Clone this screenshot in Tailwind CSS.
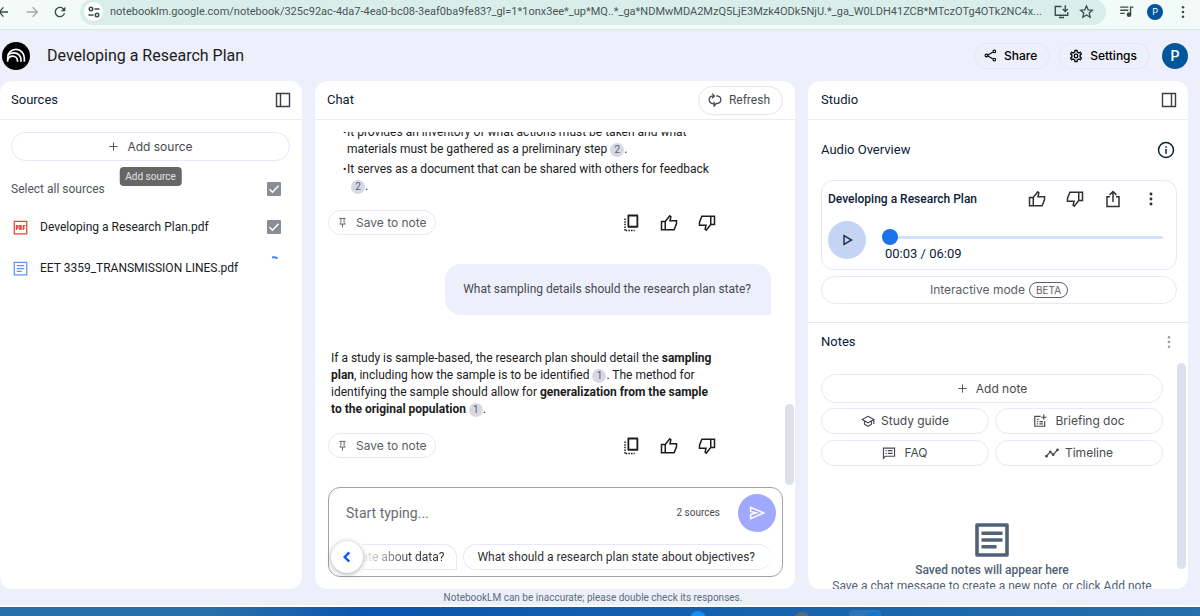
<!DOCTYPE html>
<html lang="en">
<head>
  <meta charset="UTF-8">
  <meta name="viewport" content="width=device-width, initial-scale=1.0">
  <title>Developing a Research Plan - NotebookLM</title>
  <script src="https://cdn.jsdelivr.net/npm/@tailwindcss/browser@4"></script>
</head>
<body class="h-screen overflow-hidden flex flex-col bg-[#edeffa] text-xs text-[#1b1c1d] font-[Roboto,sans-serif]">

  <!-- shared icons -->
  <svg class="hidden">
    <symbol id="thumb" viewBox="0 0 24 24"><path d="M2 10h5v11H2zM7 10l6-7.500 1.500 1.200L13.300 9H22v4l-3.200 8H7" fill="none" stroke="currentColor" stroke-width="2"/></symbol>
    <symbol id="copy" viewBox="0 0 24 24"><path d="M8.500 2h12v15h-12z" fill="none" stroke="currentColor" stroke-width="2.400" stroke-linejoin="round"/><path d="M4 6v16M5 22h12" fill="none" stroke="currentColor" stroke-width="2" stroke-dasharray="2 1.500"/></symbol>
    <symbol id="pin" viewBox="0 0 24 24"><path d="M5 3h14M8.500 3v9L6 15.500h12L15.500 12V3M12 15v8" fill="none" stroke="currentColor" stroke-width="2"/></symbol>
    <symbol id="dots" viewBox="0 0 24 24"><circle cx="12" cy="4" r="2.200"/><circle cx="12" cy="12" r="2.200"/><circle cx="12" cy="20" r="2.200"/></symbol>
    <symbol id="plus" viewBox="0 0 24 24"><path d="M12 3v18M3 12h18" stroke="currentColor" stroke-width="2"/></symbol>
    <symbol id="note" viewBox="0 0 24 24"><path d="M2 2h20v20H2z" fill="none" stroke="currentColor" stroke-width="2.400" stroke-linejoin="round"/><path d="M5 7.500h14M5 12h14M5 16.500h10" stroke="currentColor" stroke-width="2.200"/></symbol>
  </svg>

  <!-- browser toolbar -->
  <div class="h-[30px] shrink-0 flex items-center bg-[#f3fbf8] border-b border-[#d5e8e2] pb-[6px] text-[#3c4a47]">
    <button aria-label="Back" class="-ml-2 w-4 shrink-0"><svg class="size-4" viewBox="0 0 24 24" fill="none" stroke="currentColor" stroke-width="2"><path d="M24 12H11M17 5l-6 7 6 7"/></svg></button>
    <button aria-label="Forward" class="ml-4 shrink-0 text-[#a3acaa]"><svg class="size-4" viewBox="0 0 24 24" fill="none" stroke="currentColor" stroke-width="2"><path d="M4 12h15M13 5l7 7-7 7"/></svg></button>
    <button aria-label="Reload" class="ml-3 shrink-0"><svg class="size-4" viewBox="0 0 24 24" fill="currentColor"><path d="M17.650 6.350C16.200 4.900 14.210 4 12 4c-4.420 0-7.990 3.580-7.990 8s3.570 8 7.990 8c3.730 0 6.840-2.550 7.730-6h-2.080c-.820 2.330-3.040 4-5.650 4-3.310 0-6-2.690-6-6s2.690-6 6-6c1.660 0 3.140.690 4.220 1.780L13 11h7V4l-2.350 2.350z"/></svg></button>
    <div class="ml-3 flex-1 min-w-0 h-[26px] rounded-full bg-[#d9edea] flex items-center pl-1 pr-2">
      <button aria-label="View site information" class="size-[19px] shrink-0 rounded-full bg-white grid place-items-center"><svg class="size-3" viewBox="0 0 24 24" fill="none" stroke="currentColor" stroke-width="3"><circle cx="6" cy="6" r="3.500"/><path d="M13 6h10M1 18h10"/><circle cx="18" cy="18" r="3.500"/></svg></button>
      <input aria-label="Address" readonly value="notebooklm.google.com/notebook/325c92ac-4da7-4ea0-bc08-3eaf0ba9fe83?_gl=1*1onx3ee*_up*MQ..*_ga*NDMwMDA2MzQ5LjE3Mzk4ODk5NjU.*_ga_W0LDH41ZCB*MTczOTg4OTk2NC4x..." class="ml-[7px] pt-[2px] flex-1 min-w-0 bg-transparent outline-none text-[11px] text-[#4a5755]">
      <button aria-label="Install" class="ml-1 shrink-0"><svg class="size-[15px]" viewBox="0 0 24 24" fill="none" stroke="currentColor" stroke-width="2.200"><path d="M12 4H2v14h20v-5M8 21.500h8M18 2v9M14 8l4 4 4-4"/></svg></button>
      <button aria-label="Bookmark" class="ml-[10px] mr-1 shrink-0"><svg class="size-[15px]" viewBox="0 0 24 24" fill="none" stroke="currentColor" stroke-width="2"><path d="M12 3l2.700 6.300 6.800.600-5.200 4.500 1.600 6.700L12 17.500l-5.900 3.600 1.600-6.700L2.500 9.900l6.800-.600z"/></svg></button>
    </div>
    <button aria-label="Media controls" class="ml-[13px] shrink-0"><svg class="size-[15px]" viewBox="0 0 24 24" fill="none" stroke="currentColor" stroke-width="2.200"><path d="M2 5h13M2 10h13M2 15h7M18.500 17V5H23"/><circle cx="16" cy="17" r="2.600" fill="currentColor"/></svg></button>
    <button aria-label="Profile" class="ml-[13px] size-4 shrink-0 rounded-full bg-[#03569c] text-white text-[9px] leading-4">P</button>
    <button aria-label="Chrome menu" class="ml-[13px] mr-[10px] shrink-0"><svg class="size-[14px]" fill="currentColor"><use href="#dots"/></svg></button>
  </div>

  <!-- notebook header -->
  <header class="h-[51px] shrink-0 flex items-center pl-[2px] pr-3">
    <a href="#" aria-label="NotebookLM" class="size-7 rounded-full bg-black grid place-items-center"><svg class="size-[20px]" viewBox="0 0 24 24" fill="none" stroke="#fff" stroke-width="2"><path d="M2 19v-4.500C2 8 6.500 4 12 4s10 4.500 10 10.500V19"/><path d="M2 11.500C4 9 6.500 8.200 9.500 8.200c5 0 8.500 3.600 8.500 8.300V19"/><path d="M2 16c1-2.600 3.200-3.800 5.800-3.800 3.600 0 6 2.500 6 5.800v1"/></svg></a>
    <h1 class="ml-[17px] flex-1 text-base">Developing a Research Plan</h1>
    <button class="h-[26px] pl-[9px] pr-3 rounded-full border border-[#e3e5f1] flex items-center gap-[7px] font-[Inter,sans-serif] font-medium text-black"><svg class="size-[13px]" viewBox="0 0 24 24" fill="none" stroke="currentColor" stroke-width="2"><path d="M7 11l9-5M7 13l9 5"/><circle cx="4.500" cy="12" r="2.500"/><circle cx="19" cy="4.500" r="2.500"/><circle cx="19" cy="19.500" r="2.500"/></svg>Share</button>
    <button class="ml-[9px] h-[26px] pl-[9px] pr-3 rounded-full border border-[#e3e5f1] flex items-center gap-[7px] font-[Inter,sans-serif] font-medium text-black"><svg class="size-[14px]" viewBox="1 1 22 22" fill="currentColor"><path d="M19.430 12.980c.040-.320.070-.640.070-.980 0-.340-.030-.660-.070-.980l2.110-1.650c.190-.150.240-.420.120-.640l-2-3.460c-.090-.160-.260-.250-.440-.250-.060 0-.120.010-.170.030l-2.490 1c-.520-.400-1.080-.730-1.690-.980l-.380-2.650C14.460 2.180 14.250 2 14 2h-4c-.250 0-.460.180-.490.420l-.380 2.650c-.610.250-1.170.590-1.690.980l-2.490-1c-.060-.020-.120-.030-.180-.030-.170 0-.340.090-.430.250l-2 3.460c-.130.220-.070.490.120.640l2.110 1.650c-.040.320-.070.650-.070.980 0 .330.030.660.070.980l-2.110 1.650c-.190.150-.240.420-.120.640l2 3.460c.090.160.260.250.440.250.060 0 .120-.010.170-.030l2.490-1c.520.400 1.080.730 1.690.980l.380 2.650c.030.240.240.420.490.420h4c.250 0 .460-.180.490-.420l.380-2.650c.610-.250 1.170-.590 1.690-.980l2.490 1c.060.020.120.030.180.030.170 0 .340-.090.430-.250l2-3.460c.120-.220.070-.490-.120-.640l-2.110-1.650zm-1.980-1.710c.040.310.050.520.050.730 0 .210-.020.430-.050.730l-.140 1.130.890.700 1.080.840-.700 1.210-1.270-.510-1.040-.420-.900.680c-.430.320-.840.560-1.250.730l-1.060.430-.160 1.130-.200 1.350h-1.400l-.190-1.350-.160-1.130-1.060-.430c-.430-.180-.830-.410-1.230-.710l-.910-.700-1.060.430-1.270.510-.700-1.210 1.080-.840.890-.700-.140-1.130c-.030-.310-.050-.540-.050-.740s.020-.430.050-.730l.140-1.130-.890-.700-1.080-.840.700-1.210 1.270.510 1.040.420.900-.680c.430-.320.840-.560 1.250-.730l1.060-.430.160-1.130.200-1.350h1.390l.190 1.350.160 1.130 1.060.430c.430.180.830.410 1.230.710l.910.700 1.060-.430 1.270-.510.700 1.210-1.070.850-.890.700.140 1.130z"/><circle cx="12" cy="12" r="2.800" fill="none" stroke="currentColor" stroke-width="2"/></svg>Settings</button>
    <button aria-label="Account" class="ml-3 size-[26px] rounded-full bg-[#03569c] text-white text-sm font-medium">P</button>
  </header>

  <main class="flex-1 min-h-0 flex gap-[13px]">

    <!-- sources -->
    <section class="w-[302px] shrink-0 bg-white rounded-xl">
      <div class="h-[39px] border-b border-[#ebecf2] px-[11px] flex items-center justify-between text-[#0b2138]">
        <h2 class="text-[13px]">Sources</h2>
        <button aria-label="Collapse sources"><svg class="size-4 text-[#3b3f43]" viewBox="0 0 16 16" fill="none" stroke="currentColor"><path d="M1.500 1.500h13v13h-13zM5.500 1.500v13" stroke-width="1.400"/></svg></button>
      </div>
      <div class="pl-[11px] pr-3 pt-3">
        <div class="relative">
          <button class="w-full h-[29px] rounded-full border border-[#e6e8f5] flex items-center justify-center gap-2 font-[Inter,sans-serif] text-[#474a50]"><svg class="size-[11px]"><use href="#plus"/></svg>Add source</button>
          <div role="tooltip" class="absolute left-1/2 top-[35px] -translate-x-1/2 h-[19px] px-[6px] rounded-sm bg-[#666] text-[10px] leading-[19px] text-[#e3e3e3] whitespace-nowrap">Add source</div>
        </div>
        <div class="mt-[18px] h-5 flex items-center justify-between pr-[9px] text-[#53565b]">
          <label for="all">Select all sources</label>
          <span class="grid place-items-center"><input id="all" type="checkbox" checked class="peer col-start-1 row-start-1 appearance-none size-[14px] rounded-[1px] bg-white border-2 border-[#8a8d93] checked:bg-[#8a8d93]"><svg class="col-start-1 row-start-1 size-3 pointer-events-none invisible peer-checked:visible" viewBox="0 0 12 12" fill="none" stroke="#fff" stroke-width="1.500"><path d="M1.500 6.200l3 3 6-6.500"/></svg></span>
        </div>
        <ul class="text-[#1b1c1d]">
          <li class="mt-[18px] h-5 flex items-center pl-[2px] pr-[9px]">
            <svg class="size-[15px] text-[#ea4335]" viewBox="0 0 24 24" fill="none" stroke="currentColor" stroke-width="2"><path d="M2 2h20v20H2z"/><path d="M5.500 16V9H8v3.500H5.500M11 9h2v6h-2zM16.500 16V9H20M16.500 12.500H19"/></svg>
            <label for="s1" class="ml-3 flex-1">Developing a Research Plan.pdf</label>
            <span class="grid place-items-center"><input id="s1" type="checkbox" checked class="peer col-start-1 row-start-1 appearance-none size-[14px] rounded-[1px] bg-white border-2 border-[#8a8d93] checked:bg-[#8a8d93]"><svg class="col-start-1 row-start-1 size-3 pointer-events-none invisible peer-checked:visible" viewBox="0 0 12 12" fill="none" stroke="#fff" stroke-width="1.500"><path d="M1.500 6.200l3 3 6-6.500"/></svg></span>
          </li>
          <li class="mt-[21px] h-5 flex items-center pl-[2px] pr-[9px]">
            <svg class="size-[15px] text-[#5b95f5]" viewBox="0 0 24 24" fill="none" stroke="currentColor" stroke-width="2"><path d="M2 2h20v20H2zM6 7.500h12M6 12h12M6 16.500h8"/></svg>
            <span class="ml-3 flex-1">EET 3359_TRANSMISSION LINES.pdf</span>
            <svg class="w-[14px] h-6" viewBox="0 0 14 24" fill="none" stroke="#4285f4" stroke-width="2"><path d="M5 1.500c2-.500 4 0 5.500 1"/></svg>
          </li>
        </ul>
      </div>
    </section>

    <!-- chat -->
    <section class="flex-1 min-w-0 bg-white rounded-xl flex flex-col pb-3">
      <div class="h-[39px] shrink-0 border-b border-[#ebecf2] px-3 flex items-center justify-between text-[#0b2138]">
        <h2 class="text-[13px]">Chat</h2>
        <button class="h-[29px] pl-[9px] pr-3 rounded-full border border-[#e4e5e8] flex items-center gap-[7px] text-[#474a50]"><svg class="size-[14px]" viewBox="0 0 24 24" fill="none" stroke="currentColor" stroke-width="2.200"><path d="M9.500 18.500C5 18 2 15.500 2 11.500S5 5 10 5M7 1l4 4-4 4M14 5c5 0 8 3 8 6.500S19 18 14 18l-3.500 4.500V15"/></svg>Refresh</button>
      </div>
      <div class="relative mt-3 flex-1 min-h-0 overflow-hidden flex flex-col justify-end pl-[13px] pr-6 pb-[27px] leading-[17px]">
        <ul class="pl-[19px] space-y-[3px] whitespace-nowrap">
          <li class="relative before:absolute before:-left-1 before:content-['•'] before:text-[10px]">It provides an inventory of what actions must be taken and what<br>materials must be gathered as a preliminary step <button class="size-[14px] rounded-full bg-[#d8d8e2] text-[10px] leading-[14px] text-[#5a5d72]">2</button>.</li>
          <li class="relative before:absolute before:-left-1 before:content-['•'] before:text-[10px]">It serves as a document that can be shared with others for feedback<br><button class="ml-1 size-[14px] rounded-full bg-[#d8d8e2] text-[10px] leading-[14px] text-[#5a5d72]">2</button>.</li>
        </ul>
        <div class="mt-[15px] flex items-center pr-[55px]">
          <button class="mr-auto h-[25px] px-2 rounded-full border border-[#e6e8f5] flex items-center gap-2 font-[Inter,sans-serif] text-[#5b5e66]"><svg class="size-[11px]"><use href="#pin"/></svg>Save to note</button>
          <button aria-label="Copy"><svg class="size-[18px]"><use href="#copy"/></svg></button>
          <button aria-label="Good response" class="ml-5"><svg class="size-[18px]"><use href="#thumb"/></svg></button>
          <button aria-label="Bad response" class="ml-5"><svg class="size-[18px] rotate-180"><use href="#thumb"/></svg></button>
        </div>
        <div class="mt-[29px] ml-auto rounded-2xl rounded-br-none bg-[#edeffa] pl-[18px] pr-5 py-[17px] text-[#474a50]">What sampling details should the research plan state?</div>
        <p class="mt-[35px] pl-[3px] whitespace-nowrap">If a study is sample-based, the research plan should detail the <b>sampling<br>plan</b>, including how the sample is to be identified <button class="size-[14px] rounded-full bg-[#d8d8e2] text-[10px] leading-[14px] text-[#5a5d72]">1</button>. The method for<br>identifying the sample should allow for <b>generalization from the sample<br>to the original population</b> <button class="size-[14px] rounded-full bg-[#d8d8e2] text-[10px] leading-[14px] text-[#5a5d72]">1</button>.</p>
        <div class="mt-[15px] flex items-center pr-[55px]">
          <button class="mr-auto h-[25px] px-2 rounded-full border border-[#e6e8f5] flex items-center gap-2 font-[Inter,sans-serif] text-[#5b5e66]"><svg class="size-[11px]"><use href="#pin"/></svg>Save to note</button>
          <button aria-label="Copy"><svg class="size-[18px]"><use href="#copy"/></svg></button>
          <button aria-label="Good response" class="ml-5"><svg class="size-[18px]"><use href="#thumb"/></svg></button>
          <button aria-label="Bad response" class="ml-5"><svg class="size-[18px] rotate-180"><use href="#thumb"/></svg></button>
        </div>
        <div class="absolute bottom-0 right-[1px] w-[9px] h-[81px] rounded-full bg-[#dde1eb]"></div>
      </div>

      <form class="relative mt-[2px] ml-[13px] mr-3 h-[90px] shrink-0 border border-[#a0a1a4] rounded-xl flex flex-col justify-between p-[6px]">
        <div class="flex items-center pl-[11px]">
          <input aria-label="Query box" placeholder="Start typing..." class="flex-1 min-w-0 outline-none text-sm placeholder:text-[#6a6d73]">
          <span class="text-[10px] text-[#474a50]">2 sources</span>
          <button type="button" aria-label="Submit" class="ml-[18px] size-[38px] rounded-full bg-[#a0a8ff] grid place-items-center"><svg class="size-[18px]" viewBox="0 0 24 24" fill="none" stroke="#fff" stroke-width="2"><path d="M3.500 4.500L21 12 3.500 19.500v-5.500L11 12 3.500 10z"/></svg></button>
        </div>
        <div class="ml-4 mr-[5px] flex justify-end gap-[6px] overflow-hidden whitespace-nowrap text-[#303134]">
          <button type="button" class="h-[26px] pr-3 border border-l-0 border-[#e6e8f5] rounded-tr-[13px] shrink-0"><span class="bg-linear-to-r from-[#303134]/5 to-[#303134] to-60% bg-clip-text text-transparent">ate about data?</span></button>
          <button type="button" class="h-[26px] pl-[13px] pr-4 border border-r-0 border-[#e6e8f5] rounded-full shrink-0">What should a research plan state about objectives?</button>
        </div>
        <button type="button" aria-label="Previous suggestions" class="absolute left-[2px] bottom-[3px] size-8 rounded-full bg-white shadow-[0_1px_5px_rgba(0,0,0,0.35)] grid place-items-center text-[#0b57f0]"><svg class="size-[14px]" viewBox="0 0 12 12" fill="none" stroke="currentColor" stroke-width="2"><path d="M8 2L4 6l4 4"/></svg></button>
      </form>
    </section>

    <!-- studio -->
    <section class="w-[380px] mr-3 shrink-0 bg-white rounded-xl flex flex-col overflow-hidden">
      <div class="h-[39px] shrink-0 border-b border-[#ebecf2] pl-[13px] pr-[11px] flex items-center justify-between text-[#0b2138]">
        <h2 class="text-[13px]">Studio</h2>
        <button aria-label="Collapse studio"><svg class="size-4 text-[#3b3f43]" viewBox="0 0 16 16" fill="none" stroke="currentColor"><path d="M1.500 1.500h13v13h-13zM10.500 1.500v13" stroke-width="1.400"/></svg></button>
      </div>
      <div class="shrink-0 border-b border-[#e4e6f2] pl-[13px] pr-[11px] pt-5 pb-[18px]">
        <div class="h-5 flex items-center justify-between pr-[2px] text-[#0b2138]">
          <h3 class="text-[13px]">Audio Overview</h3>
          <button aria-label="About audio overviews"><svg class="size-[18px]" viewBox="0 0 24 24" fill="none" stroke="currentColor" stroke-width="2"><circle cx="12" cy="12" r="10"/><path d="M12 10.500V17M12 7v2"/></svg></button>
        </div>
        <div class="mt-5 h-[90px] rounded-xl border border-[#e6e8f5] pl-[6px] pr-[13px] pt-[9px]">
          <div class="flex items-center pr-[3px] text-[#303134]">
            <h4 class="flex-1 font-medium text-[#0b2138]">Developing a Research Plan</h4>
            <button aria-label="Like"><svg class="size-[18px]"><use href="#thumb"/></svg></button>
            <button aria-label="Dislike" class="ml-5"><svg class="size-[18px] rotate-180"><use href="#thumb"/></svg></button>
            <button aria-label="Share audio" class="ml-5"><svg class="size-[18px]" viewBox="0 0 24 24" fill="none" stroke="currentColor" stroke-width="2"><path d="M8 9H4v13h16V9h-4M12 16V2M7.500 6.500L12 2l4.500 4.500"/></svg></button>
            <button aria-label="More" class="ml-5"><svg class="size-[18px]" viewBox="-4 -4 32 32" fill="currentColor"><circle cx="12" cy="3" r="2.600"/><circle cx="12" cy="12" r="2.600"/><circle cx="12" cy="21" r="2.600"/></svg></button>
          </div>
          <div class="mt-[13px] flex">
            <button aria-label="Play" class="size-[38px] shrink-0 rounded-full bg-[#c5d4f5] grid place-items-center"><svg class="size-[14px]" viewBox="0 0 14 14" fill="none" stroke="#2b3440" stroke-width="1.500"><path d="M4 2.500v9L11.500 7z"/></svg></button>
            <div class="ml-4 flex-1 pt-2">
              <input type="range" aria-label="Seek" min="0" max="369" value="0" class="block w-full h-4 appearance-none bg-transparent [&::-webkit-slider-runnable-track]:h-[3px] [&::-webkit-slider-runnable-track]:rounded-full [&::-webkit-slider-runnable-track]:bg-[#d3e1fb] [&::-webkit-slider-thumb]:appearance-none [&::-webkit-slider-thumb]:size-4 [&::-webkit-slider-thumb]:-mt-[7px] [&::-webkit-slider-thumb]:rounded-full [&::-webkit-slider-thumb]:bg-[#1a73e8]">
              <div class="ml-[3px] mt-[1px] leading-4 text-[13px] text-[#0b2138]">00:03 / 06:09</div>
            </div>
          </div>
        </div>
        <button class="mt-[6px] w-full h-[28px] rounded-full border border-[#e6e8f5] flex items-center justify-center gap-1 font-[Inter,sans-serif] text-[#5b5e66]">Interactive mode <span class="h-4 px-[6px] rounded-full border border-[#5b5e66] text-[10px] leading-[14px]">BETA</span></button>
      </div>
      <div class="h-[38px] shrink-0 pl-[13px] pr-[12px] flex items-center justify-between text-[#0b2138]">
        <h3 class="text-[13px]">Notes</h3>
        <button aria-label="Notes menu"><svg class="size-[14px] text-[#9a9ca0]" fill="currentColor"><use href="#dots"/></svg></button>
      </div>
      <div class="relative mt-[2px] flex-1 min-h-0 overflow-hidden pl-[13px] pr-[25px] pt-[11px] font-[Inter,sans-serif] text-[#474a50]">
        <button class="w-full h-[29px] rounded-full border border-[#e6e8f5] flex items-center justify-center gap-2"><svg class="size-[11px]"><use href="#plus"/></svg>Add note</button>
        <div class="mt-[5px] grid grid-cols-2 gap-[6px]">
          <button class="h-[26px] rounded-full border border-[#e6e8f5] flex items-center justify-center gap-[6px]"><svg class="size-[14px]" viewBox="0 0 24 24" fill="none" stroke="currentColor" stroke-width="2"><path d="M12 4l10 5.500-10 5.500L2 9.500zM6 12v5.500l6 3.500 6-3.500V12M22 9.500V17"/></svg>Study guide</button>
          <button class="h-[26px] rounded-full border border-[#e6e8f5] flex items-center justify-center gap-2"><svg class="size-[14px]" viewBox="0 0 24 24" fill="none" stroke="currentColor" stroke-width="2"><path d="M13 4H3v17h17v-9M6.500 9h4M6.500 13h2M11 13h6M6.500 17h2M11 17h6M18.500 1v9M14 5.500h9"/></svg>Briefing doc</button>
          <button class="h-[26px] rounded-full border border-[#e6e8f5] flex items-center justify-center gap-2"><svg class="size-[14px]" viewBox="0 0 24 24" fill="none" stroke="currentColor" stroke-width="2"><path d="M2.500 21V3.500h19v14H6zM6 8h2M10 8h8M6 12.500h2M10 12.500h8"/></svg>FAQ</button>
          <button class="h-[26px] rounded-full border border-[#e6e8f5] flex items-center justify-center gap-[6px]"><svg class="size-[14px]" viewBox="0 0 24 24" fill="none" stroke="currentColor" stroke-width="2"><path d="M2 18l7-8 5 5 8-9"/><g fill="currentColor" stroke="none"><circle cx="2.500" cy="17.500" r="2.300"/><circle cx="9" cy="10" r="2.300"/><circle cx="14" cy="15" r="2.300"/><circle cx="21.500" cy="6.500" r="2.300"/></g></svg>Timeline</button>
        </div>
        <div class="mt-14 text-center font-[Roboto,sans-serif] leading-4 whitespace-nowrap text-[#4f6276]">
          <svg class="mx-auto size-[36px]"><use href="#note"/></svg>
          <p class="mt-1 font-medium">Saved notes will appear here</p>
          <p>Save a chat message to create a new note, or click Add note</p>
        </div>
        <div class="absolute top-0 right-[2px] w-[9px] h-[206px] rounded-full bg-[#dde1eb]"></div>
      </div>
    </section>
  </main>

  <footer class="h-[16px] shrink-0 pr-[14px] text-center text-[10px] leading-[18px] text-[#5d6c80]">NotebookLM can be inaccurate; please double check its responses.</footer>

  <!-- taskbar edge -->
  <div class="relative h-[11px] shrink-0 overflow-hidden border-t-2 border-white bg-linear-to-r from-[#2a70a8] from-17% via-[#0a55ae] via-30% to-[#2470ab]">
    <div class="absolute left-[690px] top-[4px] size-4 rounded-full bg-[#1190f5]"></div>
    <div class="absolute left-[794px] top-[5px] size-4 rounded-full bg-[#5c6b78]"></div>
    <div class="absolute left-[849px] top-[3px] w-8 h-4 rounded-sm bg-white/10"></div>
    <div class="absolute left-[865px] top-[5px] size-4 rounded-full bg-[#0e78d0]"></div>
  </div>
</body>
</html>
